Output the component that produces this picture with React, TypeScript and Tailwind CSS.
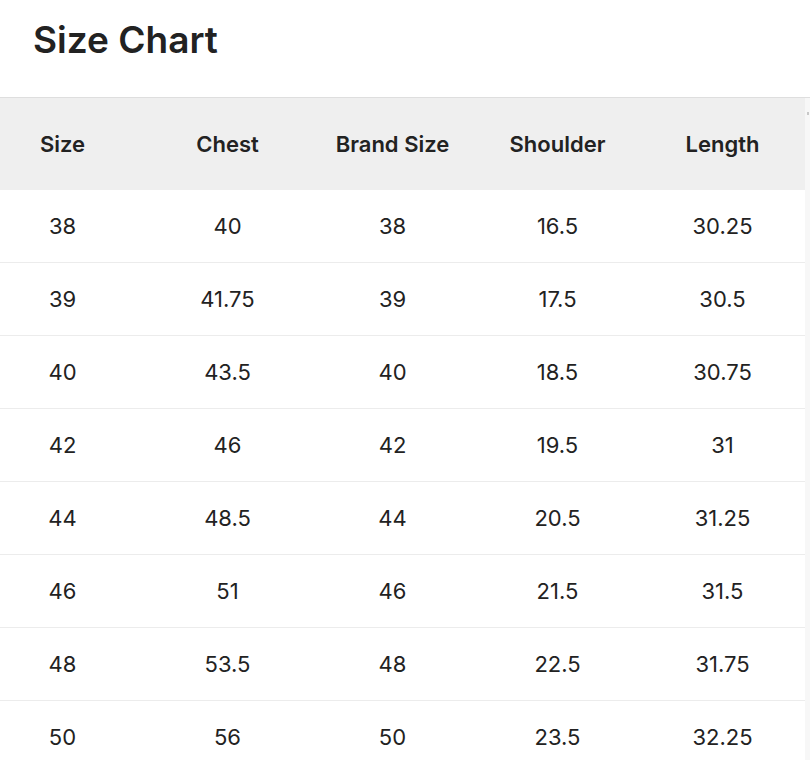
const headers = ["Size", "Chest", "Brand Size", "Shoulder", "Length"]

const rows = [
  ["38", "40", "38", "16.5", "30.25"],
  ["39", "41.75", "39", "17.5", "30.5"],
  ["40", "43.5", "40", "18.5", "30.75"],
  ["42", "46", "42", "19.5", "31"],
  ["44", "48.5", "44", "20.5", "31.25"],
  ["46", "51", "46", "21.5", "31.5"],
  ["48", "53.5", "48", "22.5", "31.75"],
  ["50", "56", "50", "23.5", "32.25"],
]

export default function App() {
  return (
    <div className="w-[810px] h-[760px] overflow-hidden bg-white text-[#222222] font-['Inter',sans-serif]">
      <h1 className="px-[33px] pt-[15px] h-[97px] text-[37px] font-semibold leading-[50px]">
        Size Chart
      </h1>
      <div className="flex border-t border-[#dedede]">
        <div className="w-[805px] overflow-hidden">
          <div className="w-[825px] -ml-[20px]">
            <div className="grid grid-cols-5 h-[92px] items-center bg-[#efefef]">
              {headers.map((h) => (
                <div key={h} className="text-center text-[22px] font-semibold">
                  {h}
                </div>
              ))}
            </div>
            {rows.map((r, i) => (
              <div
                key={i}
                className="grid grid-cols-5 h-[73px] items-center border-b border-[#ececec]"
              >
                {r.map((c, j) => (
                  <div key={j} className="text-center text-[22px]">
                    {c}
                  </div>
                ))}
              </div>
            ))}
          </div>
        </div>
        <div className="relative w-[5px] bg-[#f7f7f7]">
          <div className="absolute left-[2px] top-[14px] h-[3px] w-[2px] bg-[#c8c8c8]" />
        </div>
      </div>
    </div>
  )
}
